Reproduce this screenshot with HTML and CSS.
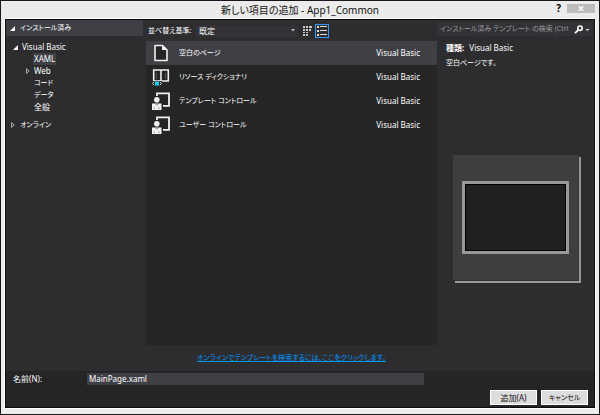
FILE: index.html
```html
<!DOCTYPE html>
<html lang="ja">
<head>
	<meta charset="UTF-8">
	<title>新しい項目の追加 - App1_Common</title>
	<link rel="stylesheet" href="styles.css">
</head>
<body>
<div class="window">
	<header class="titlebar">
		<h1 class="title">新しい項目の追加 - App1_Common</h1>
		<div class="window-buttons">
			<button class="help" type="button">?</button>
			<button class="close" type="button" aria-label="閉じる">
				<svg width="6" height="5" viewBox="0 0 6 5"><path d="M.8.3 5.2 4.7M5.2.3.8 4.7" stroke="#fff" stroke-width="1.4"/></svg>
			</button>
		</div>
	</header>

	<main class="dialog">
		<div class="content">
			<nav class="sidebar">
				<button class="section-head kana" type="button">
					<svg class="arrow" width="5" height="5" viewBox="0 0 5 5"><path d="M5 0v5H0z" fill="#fff"/></svg>
					インストール済み
				</button>
				<ul class="tree">
					<li class="node root">
						<svg class="arrow" width="5" height="5" viewBox="0 0 5 5"><path d="M5 0v5H0z" fill="#fff"/></svg>
						<span>Visual Basic</span>
					</li>
					<li class="node child"><span class="selected">XAML</span></li>
					<li class="node child expandable">
						<svg class="arrow" width="4" height="6" viewBox="0 0 4 6"><path d="M.5.7v4.6L3.2 3z" fill="none" stroke="#ccc" stroke-width=".8"/></svg>
						<span>Web</span>
					</li>
					<li class="node child kana"><span>コード</span></li>
					<li class="node child kana"><span>データ</span></li>
					<li class="node child"><span>全般</span></li>
				</ul>
				<button class="section-online kana" type="button">
					<svg class="arrow" width="4" height="6" viewBox="0 0 4 6"><path d="M.5.7v4.6L3.2 3z" fill="none" stroke="#ccc" stroke-width=".8"/></svg>
					オンライン
				</button>
			</nav>

			<section class="center">
				<div class="toolbar">
					<label class="kana" for="sort">並べ替え基準:</label>
					<div class="select-box">
						<select id="sort"><option>既定</option></select>
						<svg width="4" height="3" viewBox="0 0 4 3"><path d="M0 0h4L2 2.5z" fill="#bbb"/></svg>
					</div>
					<button class="view" type="button" aria-label="小さいアイコン">
						<svg width="10" height="10" viewBox="0 0 10 10" fill="#ccc"><path d="M0 0h2v2H0zM3 0h2v2H3zM6 0h3v2H6zM0 3h2v2H0zM3 3h2v2H3zM6 3h2v2H6zM0 6h2v1H0zM3 6h2v1H3zM0 8h2v2H0zM3 8h2v2H3z"/></svg>
					</button>
					<button class="view active" type="button" aria-label="一覧">
						<svg width="10" height="10" viewBox="0 0 10 10" fill="#ddd"><path d="M0 0h2v2H0zM3 0h7v1H3zM0 4h2v2H0zM3 4h7v1H3zM0 8h2v2H0zM3 8h7v1H3z"/></svg>
					</button>
				</div>
				<ul class="templates">
					<li class="template current">
						<svg width="18" height="18" viewBox="0 0 18 18"><path d="M3 1.5h7.5L15 6v10.5H3z" fill="#252526" stroke="#f1f1f1" stroke-width="1.6" stroke-linejoin="round"/><path d="M10 1.5V6h5z" fill="#f1f1f1"/></svg>
						<span class="name kana">空白のページ</span>
						<span class="lang">Visual Basic</span>
					</li>
					<li class="template">
						<svg width="18" height="18" viewBox="0 0 18 18"><path d="M1.7 2h14.6v11H1.7zM9 2v12" fill="none" stroke="#f1f1f1" stroke-width="1.6"/><path d="M4.5 5v6M13.5 5v6" stroke="#555"/><path d="M0 13h10v5H0z" fill="#252526"/><path d="M2.2 13.7.6 15.5l1.6 1.8M7.8 13.7l1.6 1.8-1.6 1.8" fill="none" stroke="#ddd"/><path d="M3 13.5h4v4H3z" fill="#1ccdf2"/></svg>
						<span class="name kana">リソース ディクショナリ</span>
						<span class="lang">Visual Basic</span>
					</li>
					<li class="template">
						<svg width="18" height="18" viewBox="0 0 18 18"><path d="M5 4V1.4h12v12.4H11" fill="none" stroke="#f1f1f1" stroke-width="1.8"/><circle cx="4.8" cy="7.7" r="2.8" fill="#f1f1f1"/><path d="M0 11.5h9.5V18H0z" fill="#f1f1f1"/><path d="m3.4 11.5 1.4 1.8 1.4-1.8M2.5 15.5V17M7 15.5V17" fill="none" stroke="#777" stroke-width=".8"/></svg>
						<span class="name kana">テンプレート コントロール</span>
						<span class="lang">Visual Basic</span>
					</li>
					<li class="template">
						<svg width="18" height="18" viewBox="0 0 18 18"><path d="M5 4V1.4h12v12.4H11" fill="none" stroke="#f1f1f1" stroke-width="1.8"/><circle cx="4.8" cy="7.7" r="2.8" fill="#f1f1f1"/><path d="M0 11.5h9.5V18H0z" fill="#f1f1f1"/><path d="m3.4 11.5 1.4 1.8 1.4-1.8M2.5 15.5V17M7 15.5V17" fill="none" stroke="#777" stroke-width=".8"/></svg>
						<span class="name kana">ユーザー コントロール</span>
						<span class="lang">Visual Basic</span>
					</li>
				</ul>
				<p class="online kana"><a href="#">オンラインでテンプレートを検索するには、ここをクリックします。</a></p>
			</section>

			<aside class="details">
				<div class="search">
					<input class="kana" type="text" aria-label="テンプレートの検索" placeholder="インストール済み テンプレート の検索 (Ctrl">
					<button type="button" aria-label="検索">
						<svg width="16" height="9" viewBox="0 0 16 9"><circle cx="6" cy="3.2" r="2.2" fill="none" stroke="#fff" stroke-width="1.6"/><path d="M4.4 4.8 1 8.2" stroke="#fff" stroke-width="1.8"/><path d="M11.5 4h4l-2 2z" fill="#ddd"/></svg>
					</button>
				</div>
				<p class="kind"><b>種類:</b> Visual Basic</p>
				<p class="description kana">空白ページです。</p>
				<div class="preview"><div class="screen"></div></div>
			</aside>
		</div>

		<form class="footer">
			<label class="file-label" for="file">名前(N):</label>
			<input class="file-name" id="file" type="text" value="MainPage.xaml">
			<div class="actions">
				<button type="button">追加(A)</button>
				<button class="kana" type="button">キャンセル</button>
			</div>
		</form>
	</main>
</div>
</body>
</html>
```
FILE: styles.css
```css
* {
	box-sizing: border-box;
	margin: 0;
	padding: 0;
}

body {
	font: 8px/12px "Noto Sans", "Noto Sans CJK JP", sans-serif;
	font-feature-settings: "palt";
	color: #fff;
}

ul {
	list-style: none;
}

button, input, select {
	font: inherit;
	font-feature-settings: inherit;
	color: inherit;
	background: none;
	border: none;
}

svg {
	display: block;
	flex: none;
}

.kana {
	font-size: 7px;
}

.window {
	min-height: 100vh;
	display: flex;
	flex-direction: column;
	padding: 0 4px 6px;
	background: #ebebeb;
	border: 1px solid #1c1519;
}

/* title bar */
.titlebar {
	display: grid;
	grid-template-columns: 1fr auto 1fr;
	height: 18px;
}

.title {
	grid-column: 2;
	font-size: 10px;
	font-weight: normal;
	line-height: 19px;
	color: #111;
}

.window-buttons {
	display: flex;
	justify-content: flex-end;
	gap: 6px;
	padding-top: 3px;
}

.help {
	font-size: 10px;
	font-weight: bold;
	line-height: 8px;
	height: 8px;
	color: #000;
}

.close {
	display: flex;
	align-items: center;
	justify-content: center;
	width: 28px;
	height: 9px;
	background: #bcbcbc;
}

.dialog {
	flex: 1;
	display: flex;
	flex-direction: column;
	background: #252526;
	border: 1px solid #0a0a0c;
	outline: 1px solid #fff;
}

.content {
	flex: 1;
	display: grid;
	grid-template-columns: 137px 1fr 157px;
	background: #2d2d30;
}

/* left tree */
.sidebar {
	display: flex;
	flex-direction: column;
}

.section-head {
	display: flex;
	align-items: center;
	gap: 5px;
	height: 16px;
	padding-left: 4px;
	background: #3f3f46;
}

.tree {
	padding-top: 5px;
}

.node {
	display: flex;
	align-items: center;
	gap: 4px;
	height: 12px;
}

.root {
	padding-left: 7px;
}

.child {
	padding-left: 28px;
}

.expandable {
	padding-left: 20px;
}

.selected {
	padding: 0 1px;
	margin-left: -1px;
	background: #3f3f46;
}

.section-online {
	display: flex;
	align-items: center;
	gap: 5px;
	height: 12px;
	margin-top: 6px;
	padding-left: 5px;
}

/* template list */
.center {
	display: flex;
	flex-direction: column;
	padding-left: 3px;
}

.toolbar {
	display: flex;
	align-items: center;
	height: 21px;
	padding-left: 2px;
}

.toolbar label {
	width: 48px;
	white-space: nowrap;
}

.select-box {
	display: flex;
	align-items: center;
	width: 102px;
	height: 12px;
	margin-right: 3px;
	padding-right: 3px;
	background: #333337;
}

.select-box select {
	flex: 1;
	height: 12px;
	padding-left: 3px;
	appearance: none;
}

.view {
	display: flex;
	align-items: center;
	justify-content: center;
	width: 14px;
	height: 14px;
}

.active {
	border: 1px solid #3399ff;
}

.templates {
	flex: 1;
	background: #252526;
}

.template {
	display: flex;
	align-items: center;
	height: 24px;
	padding: 0 17px 0 6px;
}

.current {
	background: #3f3f46;
}

.name {
	flex: 1;
	padding-left: 9px;
}

.online {
	height: 26px;
	line-height: 26px;
	text-align: center;
}

.online a {
	color: #0097fb;
}

/* right pane */
.search {
	display: flex;
	align-items: center;
	height: 14px;
	margin: 2px 2px 0 0;
	padding-left: 3px;
	background: #333337;
}

.search input {
	flex: 1;
	min-width: 0;
}

.search input::placeholder {
	color: #999;
}

.search button {
	padding: 0 2px 0 0;
}

.kind {
	margin-top: 6px;
	padding-left: 9px;
}

.kind b {
	margin-right: 3px;
}

.description {
	margin-top: 3px;
	padding-left: 9px;
}

.preview {
	display: flex;
	align-items: center;
	justify-content: center;
	width: 126px;
	height: 126px;
	margin: 86px 0 0 16px;
	background: #3f3f40;
	border: solid #333;
	border-width: 0 1px 1px 0;
	box-shadow: 2px 2px 0 #999;
}

.screen {
	width: 107px;
	height: 73px;
	background: #22211f;
	border: 3px solid #999;
	box-shadow: inset 0 0 0 1px #000;
}

/* file name and buttons */
.footer {
	display: grid;
	grid-template-columns: 81px 337px 1fr;
	padding: 2px 6px 2px 0;
}

.file-label {
	padding-left: 7px;
}

.file-name {
	height: 12px;
	padding-left: 2px;
	background: #3f3f46;
}

.actions {
	grid-column: 1 / -1;
	display: flex;
	justify-content: flex-end;
	gap: 4px;
	padding-top: 5px;
}

.actions button {
	width: 47px;
	height: 15px;
	line-height: 12px;
	color: #111;
	background: #ddd;
	border: 1px solid #fff;
}
```
